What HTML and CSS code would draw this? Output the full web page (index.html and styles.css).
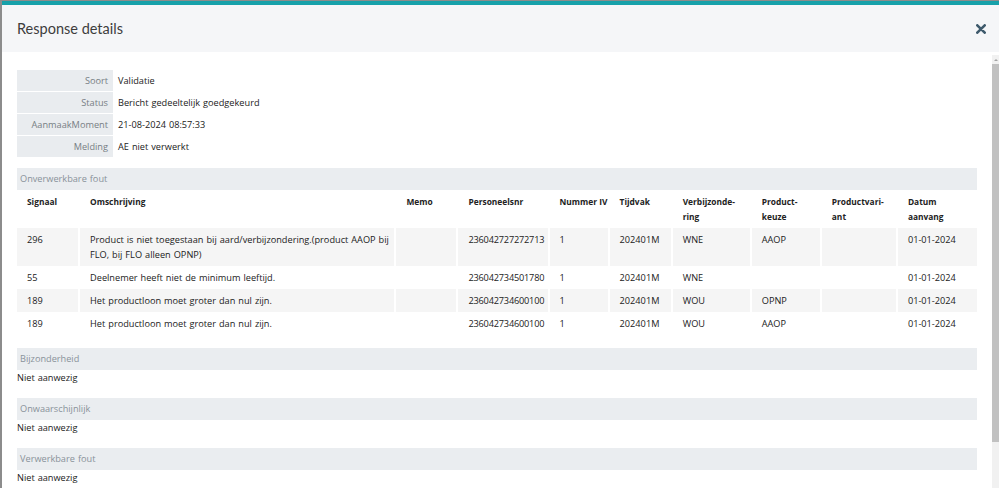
FILE: index.html
```html
<!DOCTYPE html>
<html lang="nl">
<head>
<meta charset="utf-8">
<title>Response details</title>
<link rel="stylesheet" href="styles.css">
</head>
<body>
<div class="modal">
  <div class="modal-header">
    <h1 class="modal-title">Response details</h1>
    <button class="close" aria-label="Sluiten">
      <svg width="10" height="10" viewBox="0 0 10 10"><path d="M1.3 1.3 L8.7 8.7 M8.7 1.3 L1.3 8.7" stroke="#3e5a6c" stroke-width="2.6" stroke-linecap="round"/></svg>
    </button>
  </div>
  <div class="body-wrap">
    <div class="modal-body">
      <table class="kv">
        <tr><th>Soort</th><td>Validatie</td></tr>
        <tr><th>Status</th><td>Bericht gedeeltelijk goedgekeurd</td></tr>
        <tr><th>AanmaakMoment</th><td>21-08-2024 08:57:33</td></tr>
        <tr><th>Melding</th><td>AE niet verwerkt</td></tr>
      </table>

      <div class="section">
        <div class="section-title">Onverwerkbare fout</div>
        <table class="grid">
          <colgroup>
            <col class="c-sig"><col class="c-oms"><col class="c-memo"><col class="c-pers"><col class="c-num"><col class="c-tijd"><col class="c-verb"><col class="c-pk"><col class="c-pv"><col class="c-dat">
          </colgroup>
          <thead>
            <tr><th>Signaal</th><th>Omschrijving</th><th>Memo</th><th>Personeelsnr</th><th>Nummer IV</th><th>Tijdvak</th><th>Verbijzonde-<br>ring</th><th>Product-<br>keuze</th><th>Productvari-<br>ant</th><th>Datum<br>aanvang</th></tr>
          </thead>
          <tbody>
            <tr><td>296</td><td>Product is niet toegestaan bij aard/verbijzondering.(product AAOP bij FLO, bij FLO alleen OPNP)</td><td></td><td class="num">236042727272713</td><td>1</td><td>202401M</td><td>WNE</td><td>AAOP</td><td></td><td>01-01-2024</td></tr>
            <tr><td>55</td><td>Deelnemer heeft niet de minimum leeftijd.</td><td></td><td class="num">236042734501780</td><td>1</td><td>202401M</td><td>WNE</td><td></td><td></td><td>01-01-2024</td></tr>
            <tr><td>189</td><td>Het productloon moet groter dan nul zijn.</td><td></td><td class="num">236042734600100</td><td>1</td><td>202401M</td><td>WOU</td><td>OPNP</td><td></td><td>01-01-2024</td></tr>
            <tr><td>189</td><td>Het productloon moet groter dan nul zijn.</td><td></td><td class="num">236042734600100</td><td>1</td><td>202401M</td><td>WOU</td><td>AAOP</td><td></td><td>01-01-2024</td></tr>
          </tbody>
        </table>
      </div>

      <div class="section">
        <div class="section-title">Bijzonderheid</div>
        <div class="section-text">Niet aanwezig</div>
      </div>
      <div class="section">
        <div class="section-title">Onwaarschijnlijk</div>
        <div class="section-text">Niet aanwezig</div>
      </div>
      <div class="section">
        <div class="section-title">Verwerkbare fout</div>
        <div class="section-text">Niet aanwezig</div>
      </div>
    </div>
    <div class="scrollbar" aria-hidden="true">
      <div class="sb-btn"><span class="sb-arrow"></span></div>
      <div class="sb-thumb"></div>
      <div class="sb-track"></div>
    </div>
  </div>
</div>
</body>
</html>
```
FILE: styles.css
```css
html, body {
  margin: 0;
  padding: 0;
  height: 100%;
  overflow: hidden;
}
body {
  background: #8c8c8c;
  font-family: "Open Sans", "Liberation Sans", sans-serif;
  font-size: 9.2px;
  line-height: 15px;
  word-spacing: 0.6px;
  color: #222;
}
.modal {
  margin: 1px 0 0 2px;
  height: 487px;
  background: #fff;
  border-top: 4px solid #17a1aa;
  box-sizing: border-box;
  display: flex;
  flex-direction: column;
}
.modal-header {
  height: 47px;
  flex: none;
  background: #f5f6f8;
  display: flex;
  align-items: center;
  justify-content: space-between;
  padding: 0 13px 0 15px;
}
.modal-title {
  margin: 0;
  font-family: Lato, "Open Sans", sans-serif;
  font-weight: 400;
  font-size: 14.5px;
  word-spacing: 0;
  color: #3d3d3d;
}
.close {
  border: 0;
  background: transparent;
  padding: 0;
  width: 10px;
  height: 10px;
  display: flex;
}
.body-wrap {
  flex: 1;
  min-height: 0;
  margin-top: 3px;
  display: flex;
}
.modal-body {
  flex: 1;
  min-width: 0;
  overflow: hidden;
  padding: 15px 15px 0 15px;
}
.scrollbar {
  width: 7px;
  flex: none;
  display: flex;
  flex-direction: column;
  background: #f1f1f1;
}
.sb-btn {
  height: 9px;
  display: flex;
  align-items: center;
  justify-content: center;
}
.sb-arrow {
  width: 0;
  height: 0;
  border-left: 2px solid transparent;
  border-right: 2px solid transparent;
  border-bottom: 2px solid #a3a3a3;
}
.sb-thumb {
  height: 378px;
  background: #c1c1c1;
}
.sb-track {
  flex: 1;
}

.kv {
  border-collapse: separate;
  border-spacing: 0 1px;
  margin: -1px 0 10px 0;
}
.kv th {
  background: #e9ecef;
  color: #777e84;
  font-weight: 400;
  text-align: right;
  width: 91px;
  padding: 3px 5px 3px 0;
  height: 15px;
}
.kv td {
  padding: 3px 4px 3px 5px;
  width: 216px;
}

.section {
  margin-bottom: 13px;
}
.section-title {
  background: #eaedf0;
  color: #89929a;
  height: 22px;
  line-height: 22px;
  padding: 0 3px;
}
.section-text {
  line-height: 15px;
}

.grid {
  width: 100%;
  border-collapse: collapse;
  table-layout: fixed;
}
.c-sig { width: 62px; }
.c-oms { width: 316px; }
.c-memo { width: 62px; }
.c-pers { width: 91px; }
.c-num { width: 60px; }
.c-tijd { width: 63px; }
.c-verb { width: 79px; }
.c-pk { width: 70px; }
.c-pv { width: 76px; }
.c-dat { width: 80px; }
.grid th, .grid td {
  text-align: left;
  vertical-align: top;
  padding: 4px 2px 4px 10px;
}
.grid th + th, .grid td + td {
  border-left: 2px solid #fff;
}
.grid th {
  font-weight: 700;
  font-size: 8.4px;
  word-spacing: 0;
  white-space: nowrap;
  color: #222;
}
.grid td.num {
  letter-spacing: -0.2px;
}
.grid tbody tr:nth-child(odd) td {
  background: #f5f5f5;
}
```
